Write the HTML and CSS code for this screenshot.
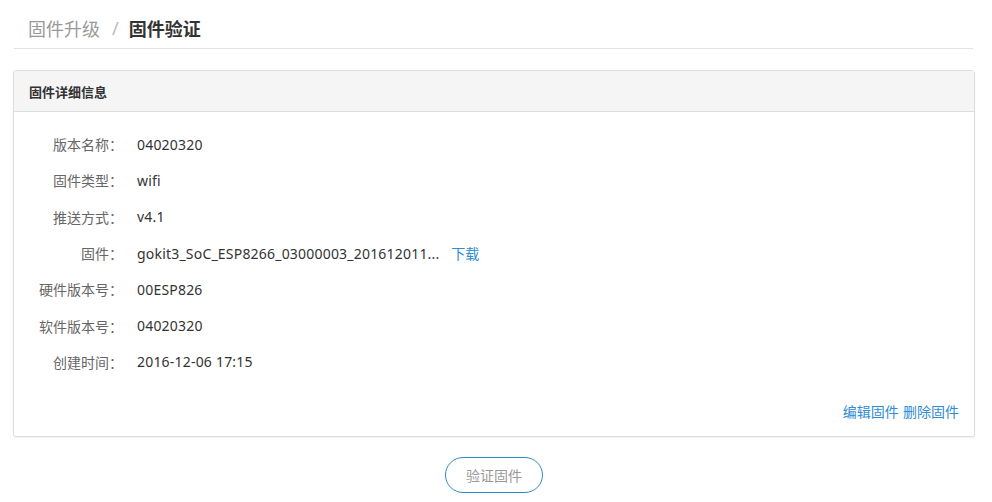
FILE: index.html
```html
<!DOCTYPE html>
<html lang="zh-CN">
<head>
<meta charset="utf-8">
<title>固件验证</title>
<link rel="stylesheet" href="styles.css">
</head>
<body>
<div class="page">
  <div class="crumbs">
    <span class="crumb-parent">固件升级</span>
    <span class="crumb-sep">/</span>
    <span class="crumb-current">固件验证</span>
  </div>
  <div class="panel">
    <div class="panel-head">固件详细信息</div>
    <div class="panel-body">
      <div class="info">
        <div class="label">版本名称：</div><div class="value">04020320</div>
        <div class="label">固件类型：</div><div class="value">wifi</div>
        <div class="label">推送方式：</div><div class="value">v4.1</div>
        <div class="label">固件：</div><div class="value">gokit3_SoC_ESP8266_03000003_201612011... <a class="link dl" href="#">下载</a></div>
        <div class="label">硬件版本号：</div><div class="value">00ESP826</div>
        <div class="label">软件版本号：</div><div class="value">04020320</div>
        <div class="label">创建时间：</div><div class="value">2016-12-06 17:15</div>
      </div>
      <div class="actions"><a class="link" href="#">编辑固件</a> <a class="link" href="#">删除固件</a></div>
    </div>
  </div>
  <div class="btn-row"><button class="btn">验证固件</button></div>
</div>
</body>
</html>
```

FILE: styles.css
```css
html, body { margin: 0; padding: 0; background: #fff; }
body { font-family: "Noto Sans", "Noto Sans CJK SC", sans-serif; color: #333; }
.page { padding: 0 17px 0 13px; }
.crumbs {
  margin-left: 1px;
  margin-right: 2px;
  height: 49px;
  border-bottom: 1px solid #e2e2e2;
  display: flex;
  align-items: center;
  padding-left: 14px;
  padding-top: 8px;
  box-sizing: border-box;
  font-size: 18px;
}
.crumb-parent { color: #999; }
.crumb-sep { color: #bbb; margin: 0 10px 0 12px; }
.crumb-current { color: #333; font-weight: bold; }
.panel {
  margin-top: 21px;
  border: 1px solid #ddd;
  border-radius: 3px;
  box-shadow: 0 1px 2px rgba(0,0,0,0.06);
}
.panel-head {
  background: #f5f5f5;
  height: 40px;
  border-bottom: 1px solid #ddd;
  display: flex;
  align-items: center;
  padding-left: 15px;
  font-size: 13px;
  font-weight: bold;
  color: #333;
}
.panel-body { padding: 14px 15px 14px 0; }
.info {
  display: grid;
  grid-template-columns: 109px 1fr;
  column-gap: 14px;
  grid-auto-rows: 36.3px;
  font-size: 14px;
}
.label, .value { display: flex; align-items: center; }
.label { justify-content: flex-end; color: #666; }
.value { color: #333; letter-spacing: 0.2px; white-space: pre; }
.link { color: #2e8bd6; text-decoration: none; font-size: 14px; letter-spacing: 0; }
.dl { margin-left: 8px; }
.actions { text-align: right; margin-top: 21px; line-height: 20px; }
.btn-row { display: flex; justify-content: center; margin-top: 20px; }
.btn {
  width: 98px;
  height: 36px;
  border: 1px solid #2e8bc4;
  border-radius: 18px;
  background: #fff;
  color: #999;
  font-family: "Noto Sans", "Noto Sans CJK SC", sans-serif;
  font-size: 14px;
}
```
